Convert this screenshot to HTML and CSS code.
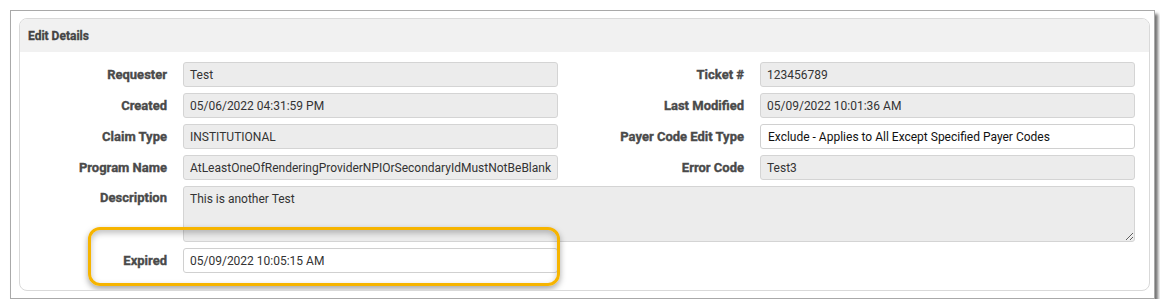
FILE: index.html
```html
<!DOCTYPE html>
<html>
<head>
<meta charset="utf-8">
<link rel="stylesheet" href="styles.css">
</head>
<body>
<div class="frame">
  <div class="panel">
    <div class="panel-heading">Edit Details</div>
    <div class="panel-body">
      <div class="form-grid">
        <label class="lbl">Requester</label>
        <div class="field ro">Test</div>
        <label class="lbl">Ticket #</label>
        <div class="field ro">123456789</div>

        <label class="lbl">Created</label>
        <div class="field ro">05/06/2022 04:31:59 PM</div>
        <label class="lbl">Last Modified</label>
        <div class="field ro">05/09/2022 10:01:36 AM</div>

        <label class="lbl">Claim Type</label>
        <div class="field ro">INSTITUTIONAL</div>
        <label class="lbl">Payer Code Edit Type</label>
        <div class="field edit dark">Exclude - Applies to All Except Specified Payer Codes</div>

        <label class="lbl">Program Name</label>
        <div class="field ro">AtLeastOneOfRenderingProviderNPIOrSecondaryIdMustNotBeBlank</div>
        <label class="lbl">Error Code</label>
        <div class="field ro">Test3</div>

        <label class="lbl lbl-top">Description</label>
        <textarea class="field ro area" readonly>This is another Test</textarea>

        <label class="lbl">Expired</label>
        <div class="field edit">05/09/2022 10:05:15 AM</div>
      </div>
      <div class="highlight"></div>
    </div>
  </div>
</div>
</body>
</html>
```
FILE: styles.css
```css
html, body {
  margin: 0;
  padding: 0;
  background: #ffffff;
}
body {
  font-family: Roboto, "Liberation Sans", Arial, sans-serif;
  font-size: 12px;
  color: #333;
}
.frame {
  margin: 10px 0 0 10px;
  width: 1131px;
  height: 277px;
  border: 1px solid #a9a9a9;
  padding: 7px 4px 3px 8px;
  box-shadow: 3px 4px 3px rgba(0,0,0,0.55);
  background: #fff;
}
.panel {
  border: 1px solid #d9d9d9;
  border-radius: 8px;
  height: 273px;
  box-sizing: border-box;
  overflow: hidden;
}
.panel-heading {
  background: #f1f1f1;
  height: 33px;
  box-sizing: border-box;
  padding: 0 0 0 8px;
  display: flex;
  align-items: center;
  font-weight: 700;
  color: #444;
  font-size: 12px;
  -webkit-text-stroke: 0.3px #444;
}
.panel-body {
  position: relative;
  padding: 10px 9px 0 0;
}
.form-grid {
  display: grid;
  grid-template-columns: 163px 375px 202px 375px;
  grid-template-rows: 25px 25px 25px 25px 56px 25px;
  row-gap: 6px;
}
.lbl {
  font-weight: 700;
  color: #4a4a4a;
  text-align: right;
  padding-right: 16px;
  display: flex;
  align-items: center;
  justify-content: flex-end;
  font-size: 13px;
  -webkit-text-stroke: 0.35px #4a4a4a;
  grid-column: auto;
}
.lbl-top {
  align-items: flex-start;
  padding-top: 4px;
}
.field {
  box-sizing: border-box;
  border: 1px solid #d4d4d4;
  border-radius: 3px;
  padding: 0 6px;
  display: flex;
  align-items: center;
  white-space: nowrap;
  overflow: hidden;
  font-family: Roboto, "Liberation Sans", Arial, sans-serif;
  font-size: 12px;
  color: #333;
}
.ro {
  background: #ececec;
}
.edit {
  background: #fff;
  border-color: #d0d0d0;
}
.dark {
  color: #111;
  padding-left: 7px;
}
.area {
  grid-column: 2 / 5;
  height: 56px;
  display: block;
  padding: 5px 6px;
  margin: 0;
  resize: both;
  line-height: 15px;
  outline: none;
}
.highlight {
  position: absolute;
  left: 68px;
  top: 175px;
  width: 466px;
  height: 53px;
  border: 3px solid #f6b400;
  border-radius: 12px;
  box-shadow: 0 3px 6px rgba(0,0,0,0.35), inset 0 3px 6px rgba(0,0,0,0.25);
  pointer-events: none;
}
```
